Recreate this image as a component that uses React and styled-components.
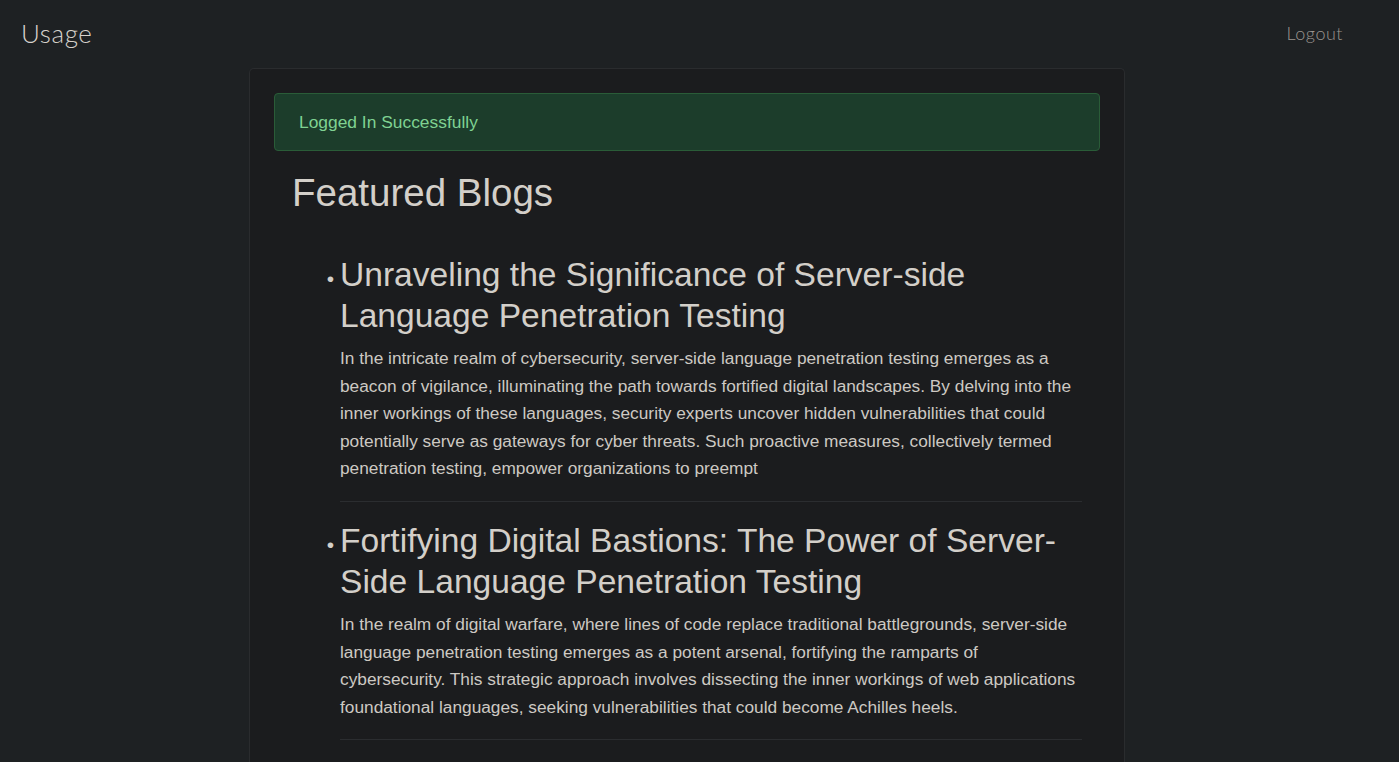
import React from "react";
import styled, { createGlobalStyle } from "styled-components";

const Global = createGlobalStyle`
  html, body { margin: 0; padding: 0; }
  body {
    background: #1e2123;
    color: #d3cfc9;
    font-family: "Liberation Sans", Arial, sans-serif;
  }
  * { box-sizing: border-box; }
`;

const NavBar = styled.nav`
  display: flex;
  align-items: center;
  justify-content: space-between;
  height: 66px;
  padding: 0 56px 0 21px;
`;

const Brand = styled.a`
  font-family: Lato, "Open Sans", sans-serif;
  font-weight: 300;
  font-size: 26px;
  letter-spacing: 0.6px;
  color: #d6d2cc;
  text-decoration: none;
`;

const NavLink = styled.a`
  font-family: Lato, "Open Sans", sans-serif;
  font-weight: 300;
  font-size: 18px;
  letter-spacing: 0.5px;
  color: #9a958f;
  text-decoration: none;
`;

const Page = styled.div`
  display: flex;
  padding: 2px 274px 0 249px;
`;

const Card = styled.main`
  flex: 1;
  background: #1b1c1e;
  border: 1px solid #2a2c2e;
  border-bottom: none;
  border-radius: 5px 5px 0 0;
  padding: 24px 24px 0;
  min-height: 700px;
`;

const Alert = styled.div`
  background: #1c3d2b;
  border: 1px solid #2a5c38;
  border-radius: 4px;
  color: #7fd292;
  font-size: 17.4px;
  line-height: 24px;
  padding: 16px 24px;
`;

const Section = styled.section`
  padding: 0 18px;
`;

const Title = styled.h1`
  font-size: 38.5px;
  font-weight: 400;
  line-height: 48px;
  margin: 18px 0 37px;
  color: #d3cfc9;
`;

const List = styled.ul`
  margin: 0;
  padding-left: 48px;
  list-style: disc;
`;

const Item = styled.li`
  font-size: 17px;
  &::marker {
    content: "\\2022\\00a0";
    font-size: 21px;
    color: #d3cfc9;
  }
`;

const PostTitle = styled.h2`
  font-size: 33.6px;
  font-weight: 400;
  line-height: 41px;
  margin: 0 0 9px;
  color: #d3cfc9;
`;

const Excerpt = styled.p`
  font-size: 17.3px;
  line-height: 27.6px;
  margin: 0 0 18px;
  color: #cdc9c3;
`;

const Divider = styled.hr`
  border: none;
  border-top: 1px solid #2b2d30;
  margin: 0 0 18px;
`;

const posts = [
  {
    title: "Unraveling the Significance of Server-side Language Penetration Testing",
    body: "In the intricate realm of cybersecurity, server-side language penetration testing emerges as a beacon of vigilance, illuminating the path towards fortified digital landscapes. By delving into the inner workings of these languages, security experts uncover hidden vulnerabilities that could potentially serve as gateways for cyber threats. Such proactive measures, collectively termed penetration testing, empower organizations to preempt",
  },
  {
    title: "Fortifying Digital Bastions: The Power of Server-Side Language Penetration Testing",
    body: "In the realm of digital warfare, where lines of code replace traditional battlegrounds, server-side language penetration testing emerges as a potent arsenal, fortifying the ramparts of cybersecurity. This strategic approach involves dissecting the inner workings of web applications foundational languages, seeking vulnerabilities that could become Achilles heels.",
  },
];

export default function App() {
  return (
    <>
      <Global />
      <NavBar>
        <Brand href="#">Usage</Brand>
        <NavLink href="#">Logout</NavLink>
      </NavBar>
      <Page>
        <Card>
          <Alert>Logged In Successfully</Alert>
          <Section>
            <Title>Featured Blogs</Title>
            <List>
              {posts.map((p) => (
                <Item key={p.title}>
                  <PostTitle>{p.title}</PostTitle>
                  <Excerpt>{p.body}</Excerpt>
                  <Divider />
                </Item>
              ))}
            </List>
          </Section>
        </Card>
      </Page>
    </>
  );
}
